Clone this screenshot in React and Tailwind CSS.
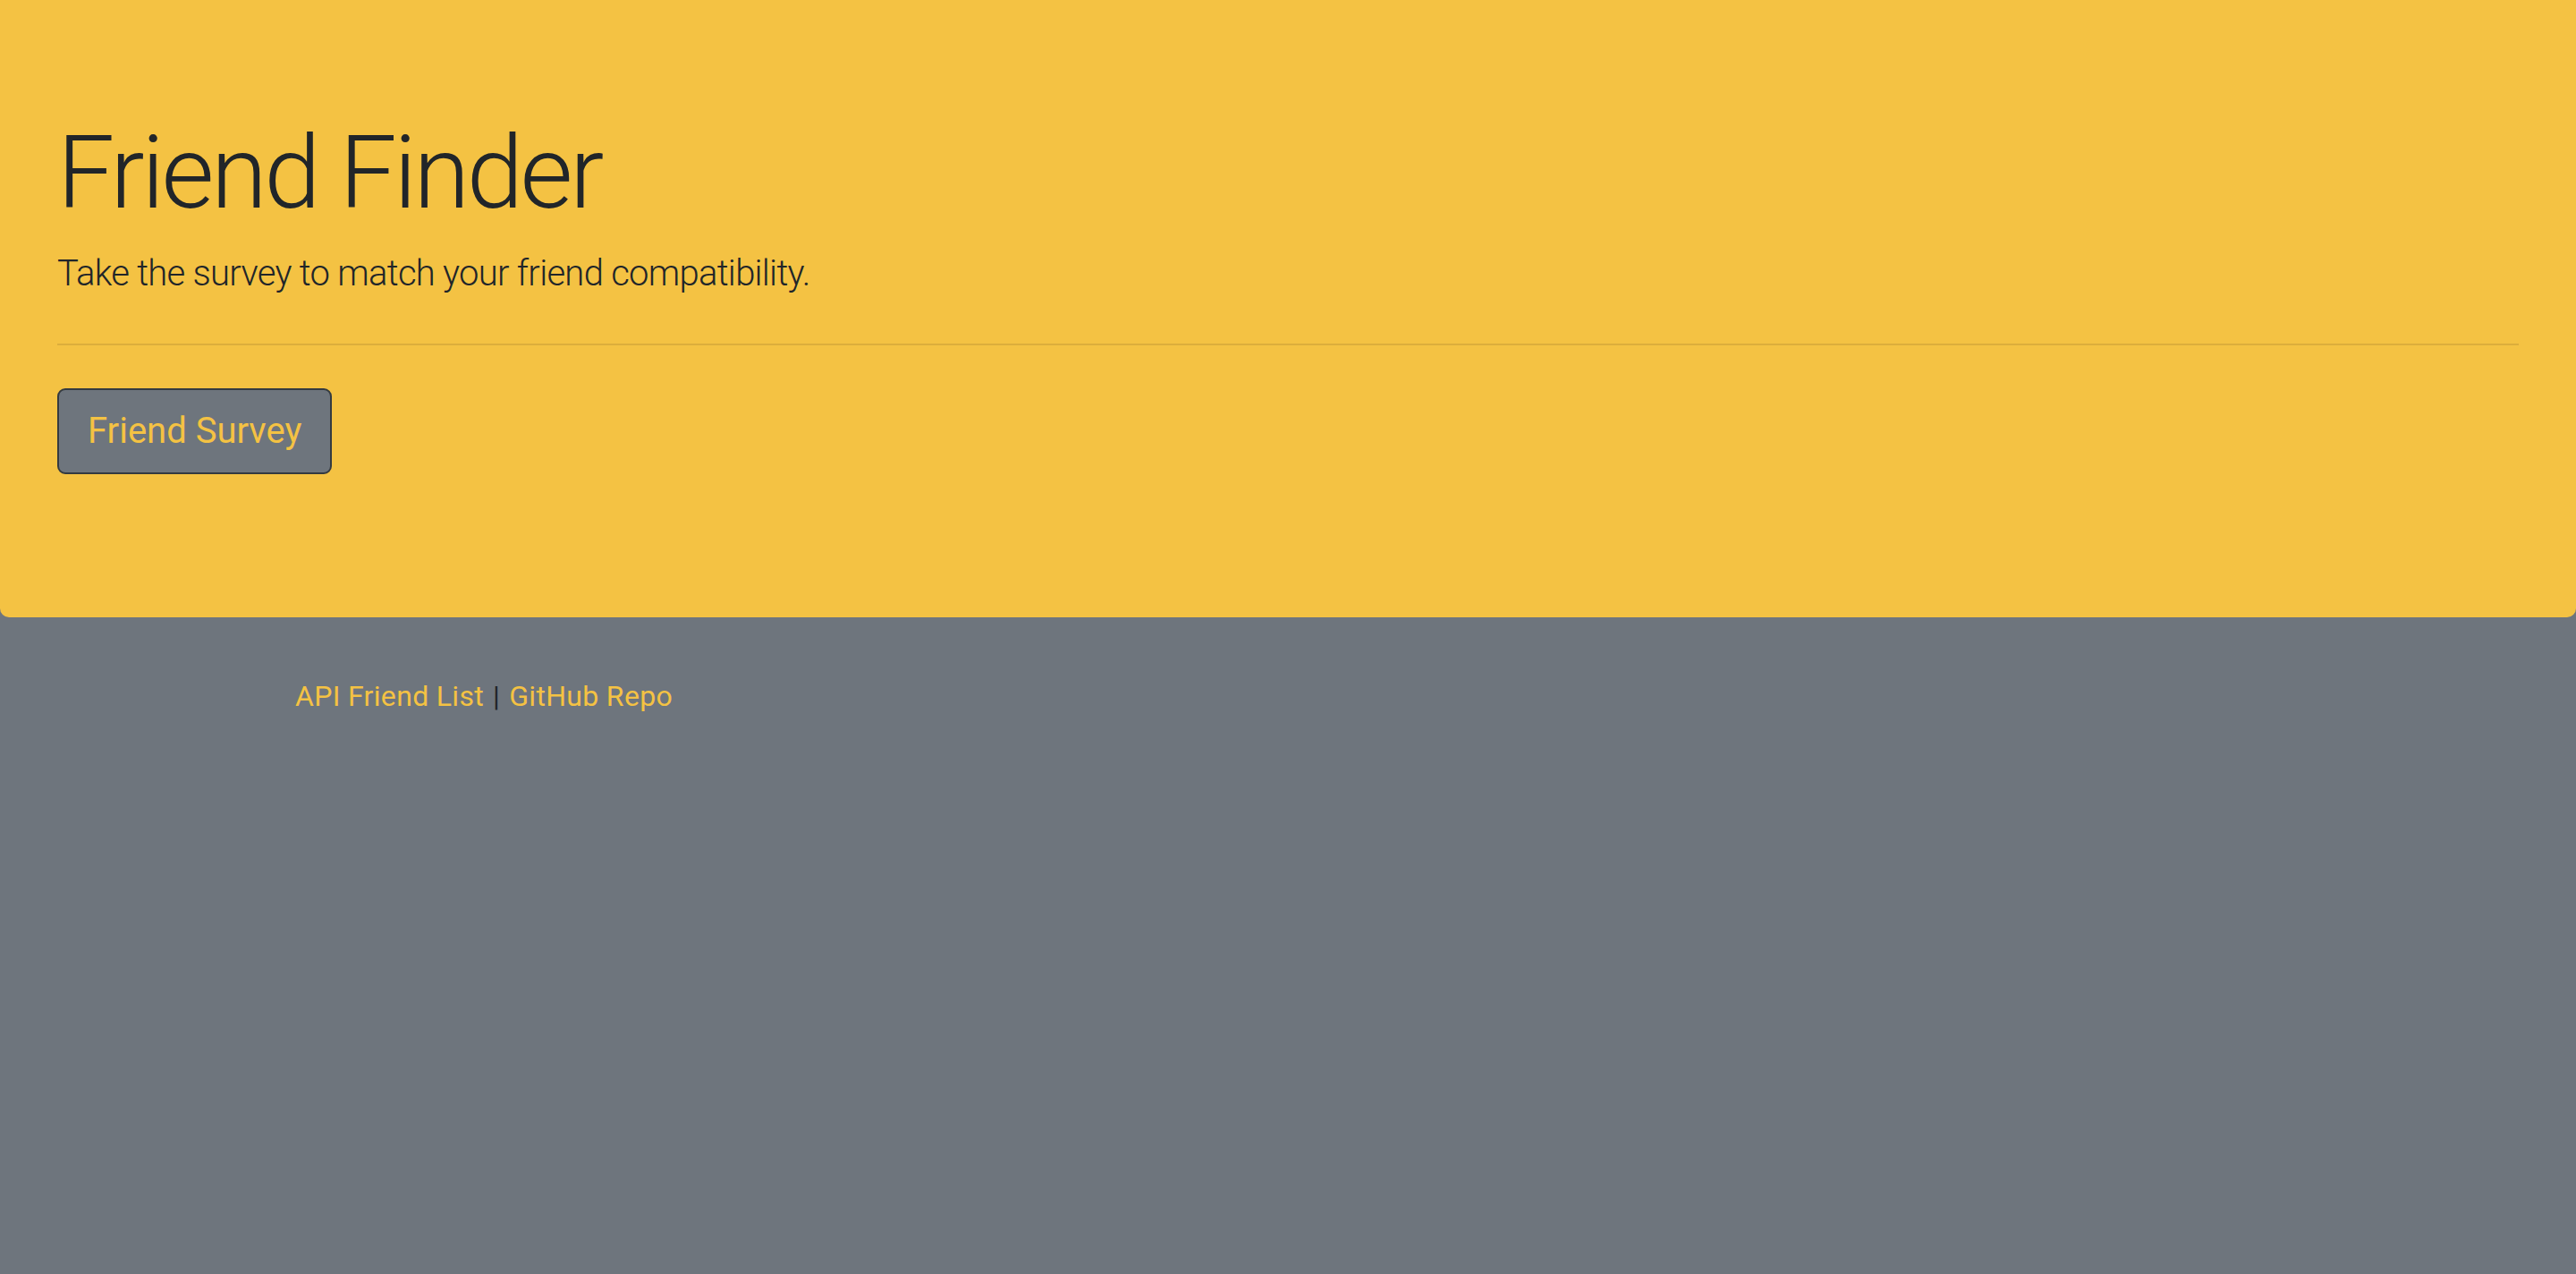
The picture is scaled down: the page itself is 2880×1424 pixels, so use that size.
export default function App() {
  return (
    <div
      className="min-h-[1424px] bg-[#6e757d] text-[#212529]"
      style={{ fontFamily: 'Roboto, "Noto Sans", sans-serif' }}
    >
      {/* Jumbotron */}
      <div className="bg-[#f4c243] rounded-b-[10px] px-16 pt-[126px] pb-[160px]">
        <h1 className="text-[114px] leading-[134px] font-light tracking-[-0.03em]">
          Friend Finder
        </h1>
        <p className="mt-4 text-[40px] leading-[1.5] font-light tracking-[-0.018em]">
          Take the survey to match your friend compatibility.
        </p>
        <hr className="my-12 border-0 h-[2px] bg-[#dcae3c]" />
        <a
          href="#"
          className="inline-block bg-[#6e757d] border-2 border-[#343a40] rounded-[9px] px-8 py-4 text-[40px] leading-[1.5] text-[#f4c243]"
        >
          Friend Survey
        </a>
      </div>

      {/* Footer links */}
      <div className="pl-[330px] pt-16 text-[32px] leading-[1.5] tracking-[0.01em]">
        <a href="#" className="text-[#f4c243]">API Friend List</a>
        <span className="mx-[10px]">|</span>
        <a href="#" className="text-[#f4c243]">GitHub Repo</a>
      </div>
    </div>
  );
}
